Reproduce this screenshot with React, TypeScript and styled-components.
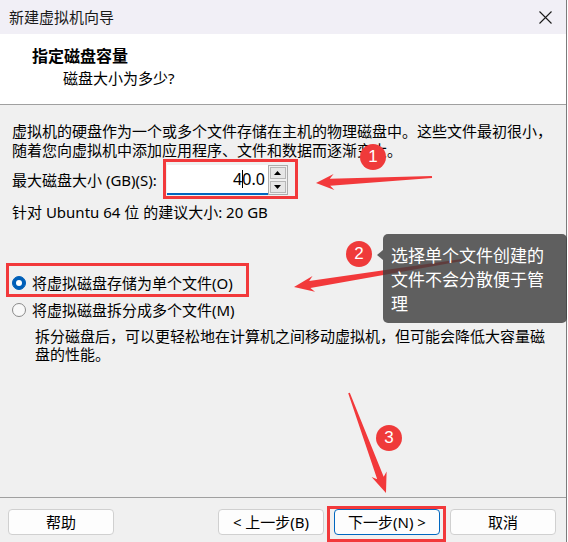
import React from "react";
import styled, { createGlobalStyle } from "styled-components";

const GlobalStyle = createGlobalStyle`
  html, body { margin: 0; padding: 0; background: #ffffff; }
  body { font-family: "Noto Sans", "Noto Sans CJK SC", sans-serif; }
  #root { width: 568px; height: 542px; }
`;

const Page = styled.div`
  position: relative;
  width: 568px;
  height: 542px;
  overflow: hidden;
`;

const Window = styled.div`
  width: 566px;
  height: 542px;
  border-right: 1px solid #7c7c7c;
  display: flex;
  flex-direction: column;
  background: #f0f0f0;
  color: #000;
  font-size: 15px;
`;

const TitleBar = styled.div`
  height: 34px;
  flex: none;
  display: flex;
  align-items: center;
  justify-content: space-between;
  padding: 0 14px 0 9px;
  background: #f1eff6;
`;

const Title = styled.span`
  font-size: 15px;
  line-height: 20px;
  color: #1a1a1a;
`;

const Header = styled.div`
  height: 71px;
  box-sizing: border-box;
  flex: none;
  background: #ffffff;
  border-bottom: 1px solid #a0a0a0;
  padding: 12px 0 0 32px;
  display: flex;
  flex-direction: column;
  gap: 2px;
`;

const HeaderTitle = styled.div`
  font-size: 16px;
  font-weight: 700;
  line-height: 20px;
`;

const HeaderSub = styled.div`
  font-size: 15px;
  line-height: 20px;
  padding-left: 31px;
`;

const Body = styled.div`
  flex: 1;
  padding: 17px 12px 0 12px;
  display: flex;
  flex-direction: column;
`;

const Paragraph = styled.p`
  margin: 0;
  line-height: 19px;
`;

const SizeRow = styled.div`
  margin-top: 5px;
  height: 30px;
  display: flex;
  align-items: center;
`;

const Label = styled.span`
  line-height: 19px;
  margin-right: 10px;
`;

const SpinInput = styled.div`
  width: 101px;
  height: 30px;
  box-sizing: border-box;
  background: #ffffff;
  border-bottom: 2px solid #0067c0;
  display: flex;
  align-items: center;
  justify-content: flex-end;
  padding-right: 3px;
  font-size: 16px;
`;

const Caret = styled.span`
  display: inline-block;
  width: 1px;
  height: 18px;
  background: #000;
  margin: 0 -1px 0 0;
  vertical-align: middle;
`;

const Spinner = styled.div`
  width: 20px;
  height: 30px;
  box-sizing: border-box;
  border: 1px solid #adadad;
  display: flex;
  flex-direction: column;
  background: #f0f0f0;
`;

const SpinBtn = styled.div`
  flex: 1;
  margin: 1px;
  background: #e6e6e6;
  border: 1px solid #b7b7b7;
  display: flex;
  align-items: center;
  justify-content: center;
`;

const Recommend = styled.div`
  margin-top: 8px;
  line-height: 19px;
`;

const RadioGroup = styled.div`
  margin-top: 50px;
  display: flex;
  flex-direction: column;
  gap: 5px;
`;

const RadioRow = styled.div`
  height: 22px;
  display: flex;
  align-items: center;
  gap: 6px;
  line-height: 19px;
`;

const RadioDot = styled.span<{ $checked?: boolean }>`
  width: 14px;
  height: 14px;
  box-sizing: border-box;
  border-radius: 50%;
  flex: none;
  display: flex;
  align-items: center;
  justify-content: center;
  background: ${(p) => (p.$checked ? "#005fb8" : "#f8f8f8")};
  border: 1px solid ${(p) => (p.$checked ? "#005fb8" : "#8a8a8a")};
  &::after {
    content: "";
    display: ${(p) => (p.$checked ? "block" : "none")};
    width: 6px;
    height: 6px;
    border-radius: 50%;
    background: #ffffff;
  }
`;

const Description = styled.p`
  margin: 6px 0 0 0;
  padding-left: 23px;
  line-height: 18px;
`;

const Footer = styled.div`
  height: 45px;
  box-sizing: border-box;
  flex: none;
  border-top: 1px solid #a0a0a0;
  padding: 11px 10px 0 8px;
  display: flex;
  align-items: flex-start;
  gap: 10px;
`;

const Button = styled.button<{ $primary?: boolean; $pushLeft?: boolean }>`
  width: 106px;
  height: 26px;
  box-sizing: border-box;
  padding: 0;
  border-radius: 4px;
  background: #fdfdfd;
  border: 1px solid ${(p) => (p.$primary ? "#0067c0" : "#d0d0d0")};
  font-family: "Noto Sans", "Noto Sans CJK SC", sans-serif;
  font-size: 15px;
  line-height: 20px;
  color: #000;
  margin-right: ${(p) => (p.$pushLeft ? "auto" : "0")};
`;

const RedBox = styled.div<{ $x: number; $y: number; $w: number; $h: number }>`
  position: absolute;
  left: ${(p) => p.$x}px;
  top: ${(p) => p.$y}px;
  width: ${(p) => p.$w}px;
  height: ${(p) => p.$h}px;
  box-sizing: border-box;
  border: 3px solid #f2393b;
  pointer-events: none;
`;

const Badge = styled.div<{ $x: number; $y: number }>`
  position: absolute;
  left: ${(p) => p.$x - 13}px;
  top: ${(p) => p.$y - 13}px;
  width: 26px;
  height: 26px;
  border-radius: 50%;
  background: #ef3a3a;
  color: #ffffff;
  font-family: "Liberation Sans", sans-serif;
  font-size: 17px;
  line-height: 26px;
  text-align: center;
`;

const Overlay = styled.svg`
  position: absolute;
  left: 0;
  top: 0;
  pointer-events: none;
`;

const Tooltip = styled.div`
  position: absolute;
  left: 383px;
  top: 234px;
  width: 184px;
  height: 89px;
  box-sizing: border-box;
  padding: 9px 8px 0 8px;
  border-radius: 5px;
  background: rgba(62, 62, 62, 0.82);
  color: #ffffff;
  font-family: "Noto Sans CJK SC", sans-serif;
  font-size: 17px;
  line-height: 24px;
  &::before {
    content: "";
    position: absolute;
    left: -6px;
    top: 16px;
    border-top: 5px solid transparent;
    border-bottom: 5px solid transparent;
    border-right: 6px solid rgba(62, 62, 62, 0.82);
  }
`;

type Pt = [number, number];

function arrowPoints(tail: Pt, tip: Pt, L: number, W: number, n: number, t: number): string {
  const dx = tip[0] - tail[0];
  const dy = tip[1] - tail[1];
  const len = Math.hypot(dx, dy);
  const ux = dx / len;
  const uy = dy / len;
  const nx = -uy;
  const ny = ux;
  const bx = tip[0] - ux * L;
  const by = tip[1] - uy * L;
  const pts: Pt[] = [
    [tail[0] + nx * t, tail[1] + ny * t],
    [bx + ux * 2 + nx * n, by + uy * 2 + ny * n],
    [bx - ux * 2 + nx * W, by - uy * 2 + ny * W],
    tip,
    [bx - ux * 2 - nx * W, by - uy * 2 - ny * W],
    [bx + ux * 2 - nx * n, by + uy * 2 - ny * n],
    [tail[0] - nx * t, tail[1] - ny * t],
  ];
  return pts.map((p) => `${p[0].toFixed(1)},${p[1].toFixed(1)}`).join(" ");
}

const CloseIcon = () => (
  <svg width="13" height="13" viewBox="0 0 13 13">
    <path d="M0.5 0.5 L12.5 12.5 M12.5 0.5 L0.5 12.5" stroke="#1a1a1a" strokeWidth="1.1" fill="none" />
  </svg>
);

const Tri = ({ up }: { up?: boolean }) => (
  <svg width="7" height="4" viewBox="0 0 7 4">
    <path d={up ? "M0 4 L3.5 0 L7 4 Z" : "M0 0 L7 0 L3.5 4 Z"} fill="#000" />
  </svg>
);

export default function App() {
  return (
    <Page>
      <GlobalStyle />
      <Window>
        <TitleBar>
          <Title>新建虚拟机向导</Title>
          <CloseIcon />
        </TitleBar>
        <Header>
          <HeaderTitle>指定磁盘容量</HeaderTitle>
          <HeaderSub>磁盘大小为多少?</HeaderSub>
        </Header>
        <Body>
          <Paragraph>
            虚拟机的硬盘作为一个或多个文件存储在主机的物理磁盘中。这些文件最初很小，
            <br />
            随着您向虚拟机中添加应用程序、文件和数据而逐渐变大。
          </Paragraph>
          <SizeRow>
            <Label>最大磁盘大小 (GB)(S):</Label>
            <SpinInput>
              4<Caret />0.0
            </SpinInput>
            <Spinner>
              <SpinBtn>
                <Tri up />
              </SpinBtn>
              <SpinBtn>
                <Tri />
              </SpinBtn>
            </Spinner>
          </SizeRow>
          <Recommend>针对 Ubuntu 64 位 的建议大小: 20 GB</Recommend>
          <RadioGroup>
            <RadioRow>
              <RadioDot $checked />
              <span>将虚拟磁盘存储为单个文件(O)</span>
            </RadioRow>
            <RadioRow>
              <RadioDot />
              <span>将虚拟磁盘拆分成多个文件(M)</span>
            </RadioRow>
          </RadioGroup>
          <Description>
            拆分磁盘后，可以更轻松地在计算机之间移动虚拟机，但可能会降低大容量磁
            <br />
            盘的性能。
          </Description>
        </Body>
        <Footer>
          <Button $pushLeft>帮助</Button>
          <Button>&lt; 上一步(B)</Button>
          <Button $primary>下一步(N) &gt;</Button>
          <Button>取消</Button>
        </Footer>
      </Window>

      <RedBox $x={163} $y={159} $w={135} $h={40} />
      <RedBox $x={6} $y={263} $w={243} $h={34} />
      <RedBox $x={327} $y={506} $w={119} $h={36} />

      <Overlay width="568" height="542" viewBox="0 0 568 542">
        <polygon points={arrowPoints([432, 177], [316, 183], 16, 8, 3.5, 1)} fill="#f2393b" />
        <polygon points={arrowPoints([462, 260], [294, 287], 18, 8, 3.5, 1)} fill="#f2393b" />
        <polygon points={arrowPoints([349, 393], [386, 493], 18, 8, 3.5, 0.8)} fill="#f2393b" />
      </Overlay>

      <Badge $x={373} $y={157}>1</Badge>
      <Badge $x={359} $y={254}>2</Badge>
      <Badge $x={389} $y={438}>3</Badge>

      <Tooltip>选择单个文件创建的文件不会分散便于管理</Tooltip>
    </Page>
  );
}
